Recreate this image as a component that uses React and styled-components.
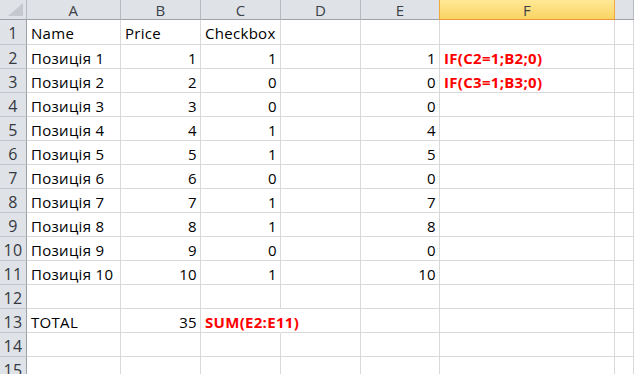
import React from "react";
import styled, { createGlobalStyle, css } from "styled-components";

const Global = createGlobalStyle`
  html, body { margin: 0; padding: 0; background: #fff; overflow: hidden; }
  body { font-family: "Open Sans", "Liberation Sans", sans-serif; }
`;

const Sheet = styled.div`
  display: grid;
  grid-template-columns: 27px 94px 80px 80px 80px 79px 175px 1fr;
  grid-template-rows: 20px 25px repeat(14, 24px);
  width: 634px;
  height: 374px;
  overflow: hidden;
  font-size: 15px;
  letter-spacing: 0.3px;
`;

const Corner = styled.div`
  box-sizing: border-box;
  background: #dfe2e7;
  border-right: 1px solid #b6bac0;
  border-bottom: 1px solid #9da2a9;
  display: flex;
  align-items: flex-end;
  justify-content: flex-end;
  padding: 0 3px 3px 0;
`;

const ColHead = styled.div`
  box-sizing: border-box;
  background: #dfe2e7;
  border-right: 1px solid #b6bac0;
  border-bottom: 1px solid #9da2a9;
  color: #3b3f47;
  display: flex;
  align-items: center;
  justify-content: center;
  padding-top: 1px;
  ${(p) =>
    p.$active &&
    css`
      background: linear-gradient(#ffe896, #f9d463);
      border-right: 1px solid #f0a940;
      border-left: 1px solid #f0a940;
      margin-left: -1px;
      border-bottom: 1px solid #f29436;
    `}
`;

const RowHead = styled.div`
  box-sizing: border-box;
  background: #dfe2e7;
  border-right: 1px solid #9da2a9;
  border-bottom: 1px solid #c3c7cd;
  color: #353942;
  font-size: 16px;
  display: flex;
  align-items: center;
  justify-content: center;
  padding-top: 2px;
`;

const Cell = styled.div`
  box-sizing: border-box;
  border-right: ${(p) => (p.$overflow ? "1px solid transparent" : "1px solid #d9d9d9")};
  border-bottom: 1px solid #d9d9d9;
  display: flex;
  align-items: center;
  justify-content: ${(p) => (p.$num ? "flex-end" : "flex-start")};
  padding: 2px ${(p) => (p.$num ? "3px" : "0")} 0 ${(p) => (p.$num ? "0" : "4px")};
  white-space: nowrap;
  color: #000;
  overflow: ${(p) => (p.$overflow ? "visible" : "hidden")};
  position: ${(p) => (p.$overflow ? "relative" : "static")};
  z-index: ${(p) => (p.$overflow ? 1 : 0)};
`;

const Formula = styled.span`
  color: #ff0000;
  font-weight: 700;
  letter-spacing: 0.3px;
  background: #fff;
`;

const cols = ["A", "B", "C", "D", "E", "F", ""];

const checks = [1, 0, 0, 1, 1, 0, 1, 1, 0, 1];

function buildRows() {
  const rows = [];
  rows.push([
    { v: "Name" },
    { v: "Price" },
    { v: "Checkbox" },
    {},
    {},
    {},
    {},
  ]);
  for (let i = 1; i <= 10; i++) {
    const c = checks[i - 1];
    const f =
      i === 1 ? "IF(C2=1;B2;0)" : i === 2 ? "IF(C3=1;B3;0)" : null;
    rows.push([
      { v: `Позиція ${i}` },
      { v: i, num: true },
      { v: c, num: true },
      {},
      { v: c ? i : 0, num: true },
      f ? { v: f, formula: true } : {},
      {},
    ]);
  }
  rows.push([{}, {}, {}, {}, {}, {}, {}]);
  rows.push([
    { v: "TOTAL" },
    { v: 35, num: true },
    { v: "SUM(E2:E11)", formula: true, overflow: true },
    {},
    {},
    {},
    {},
  ]);
  rows.push([{}, {}, {}, {}, {}, {}, {}]);
  rows.push([{}, {}, {}, {}, {}, {}, {}]);
  return rows;
}

const CornerMark = () => (
  <svg width="15" height="13" viewBox="0 0 15 13">
    <polygon points="15,0 15,13 0,13" fill="#c5c9cf" />
  </svg>
);

export default function App() {
  const rows = buildRows();
  return (
    <>
      <Global />
      <Sheet>
        <Corner>
          <CornerMark />
        </Corner>
        {cols.map((c, i) => (
          <ColHead key={i} $active={c === "F"}>
            {c}
          </ColHead>
        ))}
        {rows.map((r, ri) => (
          <React.Fragment key={ri}>
            <RowHead>{ri + 1}</RowHead>
            {r.map((cell, ci) => (
              <Cell key={ci} $num={cell.num} $overflow={cell.overflow}>
                {cell.formula ? <Formula>{cell.v}</Formula> : cell.v}
              </Cell>
            ))}
          </React.Fragment>
        ))}
      </Sheet>
    </>
  );
}
